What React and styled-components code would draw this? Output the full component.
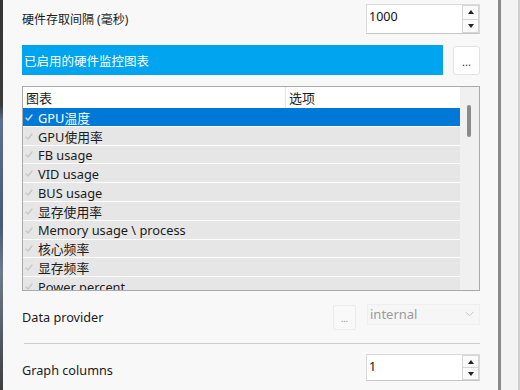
import React from 'react';
import styled, { createGlobalStyle } from 'styled-components';

const Global = createGlobalStyle`
  html, body { margin: 0; padding: 0; width: 520px; height: 390px; overflow: hidden; background: #f8f8f8; }
  * { box-sizing: border-box; }
  body { font-family: "Noto Sans", "Noto Sans CJK SC", sans-serif; color: #1b1b1b; }
`;

const Window = styled.div`
  display: flex;
  width: 520px;
  height: 390px;
`;

const LeftEdge = styled.div`
  width: 3px;
  background: linear-gradient(#343434 0%, #3a3a3a 27%, #5b6f92 31%, #46597a 58%, #6e7b8c 70%, #3e3e3e 100%);
`;

const Panel = styled.div`
  flex: 1;
  display: flex;
  flex-direction: column;
  padding: 4px 18px 0 19px;
  background: #f8f8f8;
  overflow: hidden;
`;

const Divider = styled.div`
  width: 3px;
  background: #8a8a8a;
`;

const Gutter = styled.div`
  width: 19px;
  background: #f3f3f3;
  border-right: 2px solid #cfcfcf;
`;

const FieldRow = styled.div`
  display: flex;
  align-items: center;
  justify-content: space-between;
  flex-shrink: 0;
  height: ${p => p.$h}px;
  margin-top: ${p => p.$mt || 0}px;
`;

const Label = styled.span`
  font-size: ${p => p.$size || 13}px;
  margin-top: ${p => p.$dy || 0}px;
  color: #1b1b1b;
`;

const SpinBox = styled.div`
  width: 114px;
  height: 100%;
  display: flex;
  background: #fff;
  border: 1px solid #dadada;
  border-bottom-color: #c6c6c6;
`;

const SpinValue = styled.div`
  flex: 1;
  padding: 3px 0 0 2px;
  font-size: 12.5px;
  color: #111;
`;

const SpinButtons = styled.div`
  width: 17px;
  display: flex;
  flex-direction: column;
`;

const SpinBtn = styled.div`
  flex: 1;
  display: flex;
  align-items: center;
  justify-content: center;
  background: #fafafa;
  border: 1px solid #d6d6d6;
  & + & { border-top: none; }
`;

const Arrow = styled.span`
  width: 0;
  height: 0;
  border-left: 3.5px solid transparent;
  border-right: 3.5px solid transparent;
  ${p => p.$down ? 'border-top: 4px solid #222;' : 'border-bottom: 4px solid #222;'}
`;

const BlueBar = styled.div`
  flex: 1;
  height: 100%;
  display: flex;
  align-items: center;
  padding-left: 2px;
  background: #00a4ef;
  color: #fff;
  font-size: 12.5px;
`;

const DotsButton = styled.div`
  width: 27px;
  height: 29px;
  margin-left: 10px;
  display: flex;
  align-items: center;
  justify-content: center;
  padding-top: 3px;
  background: #fff;
  border: 1px solid #e2e2e2;
  border-radius: 3px;
  font-size: 11px;
  color: #333;
`;

const List = styled.div`
  flex-shrink: 0;
  margin-top: 11px;
  height: 205px;
  display: flex;
  border: 1px solid #a9a9a9;
  background: #fff;
  overflow: hidden;
`;

const ListMain = styled.div`
  flex: 1;
  overflow: hidden;
`;

const Header = styled.div`
  display: flex;
  height: 21px;
  background: #fff;
`;

const HeaderCell = styled.div`
  width: ${p => p.$w ? p.$w + 'px' : 'auto'};
  flex: ${p => p.$w ? 'none' : 1};
  display: flex;
  align-items: center;
  padding-left: 3px;
  font-size: 13px;
  border-right: 1px solid ${p => p.$w ? '#e6e6e6' : 'transparent'};
`;

const Row = styled.div`
  height: 18.8px;
  display: flex;
  align-items: center;
  padding: 1px 0 0 2px;
  border-bottom: 1px solid #fff;
  background: ${p => p.$sel ? '#0078d7' : '#e6e6e6'};
  color: ${p => p.$sel ? '#fff' : '#1b1b1b'};
  font-size: 12.8px;
  white-space: nowrap;
`;

const Check = styled.svg`
  width: 8px;
  height: 7px;
  margin-right: 5px;
  flex-shrink: 0;
`;

const ScrollTrack = styled.div`
  width: 19px;
  background: #f0f0f0;
  display: flex;
  flex-direction: column;
`;

const Thumb = styled.div`
  width: 4px;
  height: 32px;
  margin: 18px 0 0 7px;
  border-radius: 2px;
  background: #8a8a8a;
`;

const RightGroup = styled.div`
  display: flex;
  align-items: flex-start;
  height: 100%;
`;

const SmallDots = styled.div`
  width: 23px;
  height: 25px;
  margin-top: 1px;
  margin-right: 11px;
  display: flex;
  align-items: flex-end;
  justify-content: center;
  padding-bottom: 4px;
  background: #f9f9f9;
  border: 1px solid #ebebeb;
  border-radius: 2px;
  font-size: 9px;
  color: #8a8a8a;
`;

const Combo = styled.div`
  width: 113px;
  height: 21px;
  display: flex;
  align-items: center;
  justify-content: space-between;
  padding: 0 5px 1px 2px;
  background: #f6f6f6;
  border: 1px solid #efefef;
  font-size: 13px;
  color: #9a9a9a;
`;

const Chevron = styled.svg`
  width: 9px;
  height: 6px;
`;

const Separator = styled.div`
  flex-shrink: 0;
  height: 1px;
  margin: 13px 0 0 2px;
  background: #cdcdcd;
`;

const rows = [
  'GPU温度',
  'GPU使用率',
  'FB usage',
  'VID usage',
  'BUS usage',
  '显存使用率',
  'Memory usage \\ process',
  '核心频率',
  '显存频率',
  'Power percent',
  'Fan speed',
];

function Spin({ value }) {
  return (
    <SpinBox>
      <SpinValue>{value}</SpinValue>
      <SpinButtons>
        <SpinBtn><Arrow /></SpinBtn>
        <SpinBtn><Arrow $down /></SpinBtn>
      </SpinButtons>
    </SpinBox>
  );
}

export default function App() {
  return (
    <>
      <Global />
      <Window>
        <LeftEdge />
        <Panel>
          <FieldRow $h={30}>
            <Label $size={12}>硬件存取间隔 (毫秒)</Label>
            <Spin value="1000" />
          </FieldRow>
          <FieldRow $h={30} $mt={11}>
            <BlueBar>已启用的硬件监控图表</BlueBar>
            <DotsButton>...</DotsButton>
          </FieldRow>
          <List>
            <ListMain>
              <Header>
                <HeaderCell $w={263}>图表</HeaderCell>
                <HeaderCell>选项</HeaderCell>
              </Header>
              {rows.map((r, i) => (
                <Row key={r} $sel={i === 0}>
                  <Check viewBox="0 0 8 7">
                    <path d="M1 4 L3 6 L7 1" fill="none"
                      stroke={i === 0 ? '#cfe2f6' : '#c8c8c8'} strokeWidth="1.4"
                      strokeLinecap="round" strokeLinejoin="round" />
                  </Check>
                  {r}
                </Row>
              ))}
            </ListMain>
            <ScrollTrack>
              <Thumb />
            </ScrollTrack>
          </List>
          <FieldRow $h={26} $mt={13}>
            <Label $size={12.7}>Data provider</Label>
            <RightGroup>
              <SmallDots>...</SmallDots>
              <Combo>
                internal
                <Chevron viewBox="0 0 9 6">
                  <path d="M0.5 0.8 L4.5 4.8 L8.5 0.8" fill="none" stroke="#c4c4c4" strokeWidth="1" />
                </Chevron>
              </Combo>
            </RightGroup>
          </FieldRow>
          <Separator />
          <FieldRow $h={27} $mt={10}>
            <Label $size={12.7} $dy={4}>Graph columns</Label>
            <Spin value="1" />
          </FieldRow>
        </Panel>
        <Divider />
        <Gutter />
      </Window>
    </>
  );
}
